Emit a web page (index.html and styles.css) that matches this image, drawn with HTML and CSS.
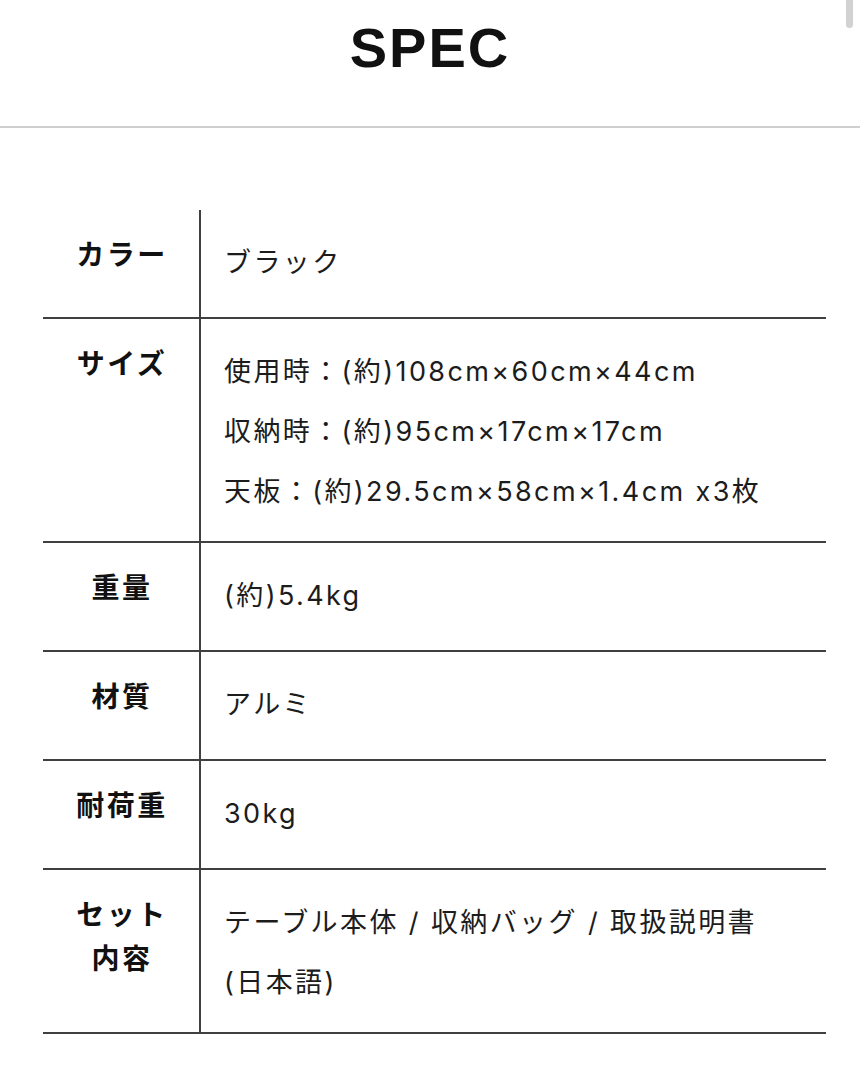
FILE: index.html
```html
<!DOCTYPE html>
<html lang="ja">
<head>
<meta charset="utf-8">
<title>SPEC</title>
<link rel="stylesheet" href="styles.css">
</head>
<body>
<div class="scroll-thumb"></div>
<header class="header">
  <h1 class="title">SPEC</h1>
</header>
<main class="spec">
  <div class="row">
    <div class="label">カラー</div>
    <div class="value"><p>ブラック</p></div>
  </div>
  <div class="row">
    <div class="label">サイズ</div>
    <div class="value">
      <p>使用時：(約)108cm×60cm×44cm</p>
      <p>収納時：(約)95cm×17cm×17cm</p>
      <p>天板：(約)29.5cm×58cm×1.4cm x3枚</p>
    </div>
  </div>
  <div class="row">
    <div class="label">重量</div>
    <div class="value"><p>(約)5.4kg</p></div>
  </div>
  <div class="row">
    <div class="label">材質</div>
    <div class="value"><p>アルミ</p></div>
  </div>
  <div class="row">
    <div class="label">耐荷重</div>
    <div class="value"><p>30kg</p></div>
  </div>
  <div class="row">
    <div class="label">セット<br>内容</div>
    <div class="value">
      <p>テーブル本体 / 収納バッグ / 取扱説明書</p>
      <p>(日本語)</p>
    </div>
  </div>
</main>
</body>
</html>
```

FILE: styles.css
```css
html, body {
  margin: 0;
  padding: 0;
  background: #ffffff;
}

body {
  font-family: "Inter", "Noto Sans CJK JP", sans-serif;
  color: #1a1a1a;
  position: relative;
  width: 860px;
  min-height: 1080px;
}

.scroll-thumb {
  position: absolute;
  top: 0;
  right: 7px;
  width: 7px;
  height: 28px;
  border-radius: 0 0 4px 4px;
  background: #d2d2d2;
}

.header {
  height: 126px;
  border-bottom: 2px solid #cfcfcf;
  display: flex;
  justify-content: center;
  align-items: flex-start;
}

.title {
  margin: 22px 0 0 0;
  font-family: "Liberation Sans", Arial, sans-serif;
  font-weight: 700;
  font-size: 56px;
  line-height: 52px;
  letter-spacing: 2px;
  color: #111;
}

.spec {
  margin: 82px 34px 0 43px;
  display: flex;
  flex-direction: column;
}

.row {
  display: grid;
  grid-template-columns: 158px 1fr;
  min-height: 107px;
  border-bottom: 2px solid #404040;
}

.label {
  border-right: 2px solid #404040;
  padding-top: 21px;
  padding-left: 2px;
  text-align: center;
  font-family: "Noto Sans CJK JP", sans-serif;
  font-weight: 700;
  font-size: 28px;
  line-height: 44px;
  letter-spacing: 2.5px;
  color: #111;
}

.value {
  padding: 23px 0 19px 23px;
  font-size: 27px;
  line-height: 60px;
  letter-spacing: 2.4px;
  color: #1c1c1c;
}

.value p {
  margin: 0;
}
```
